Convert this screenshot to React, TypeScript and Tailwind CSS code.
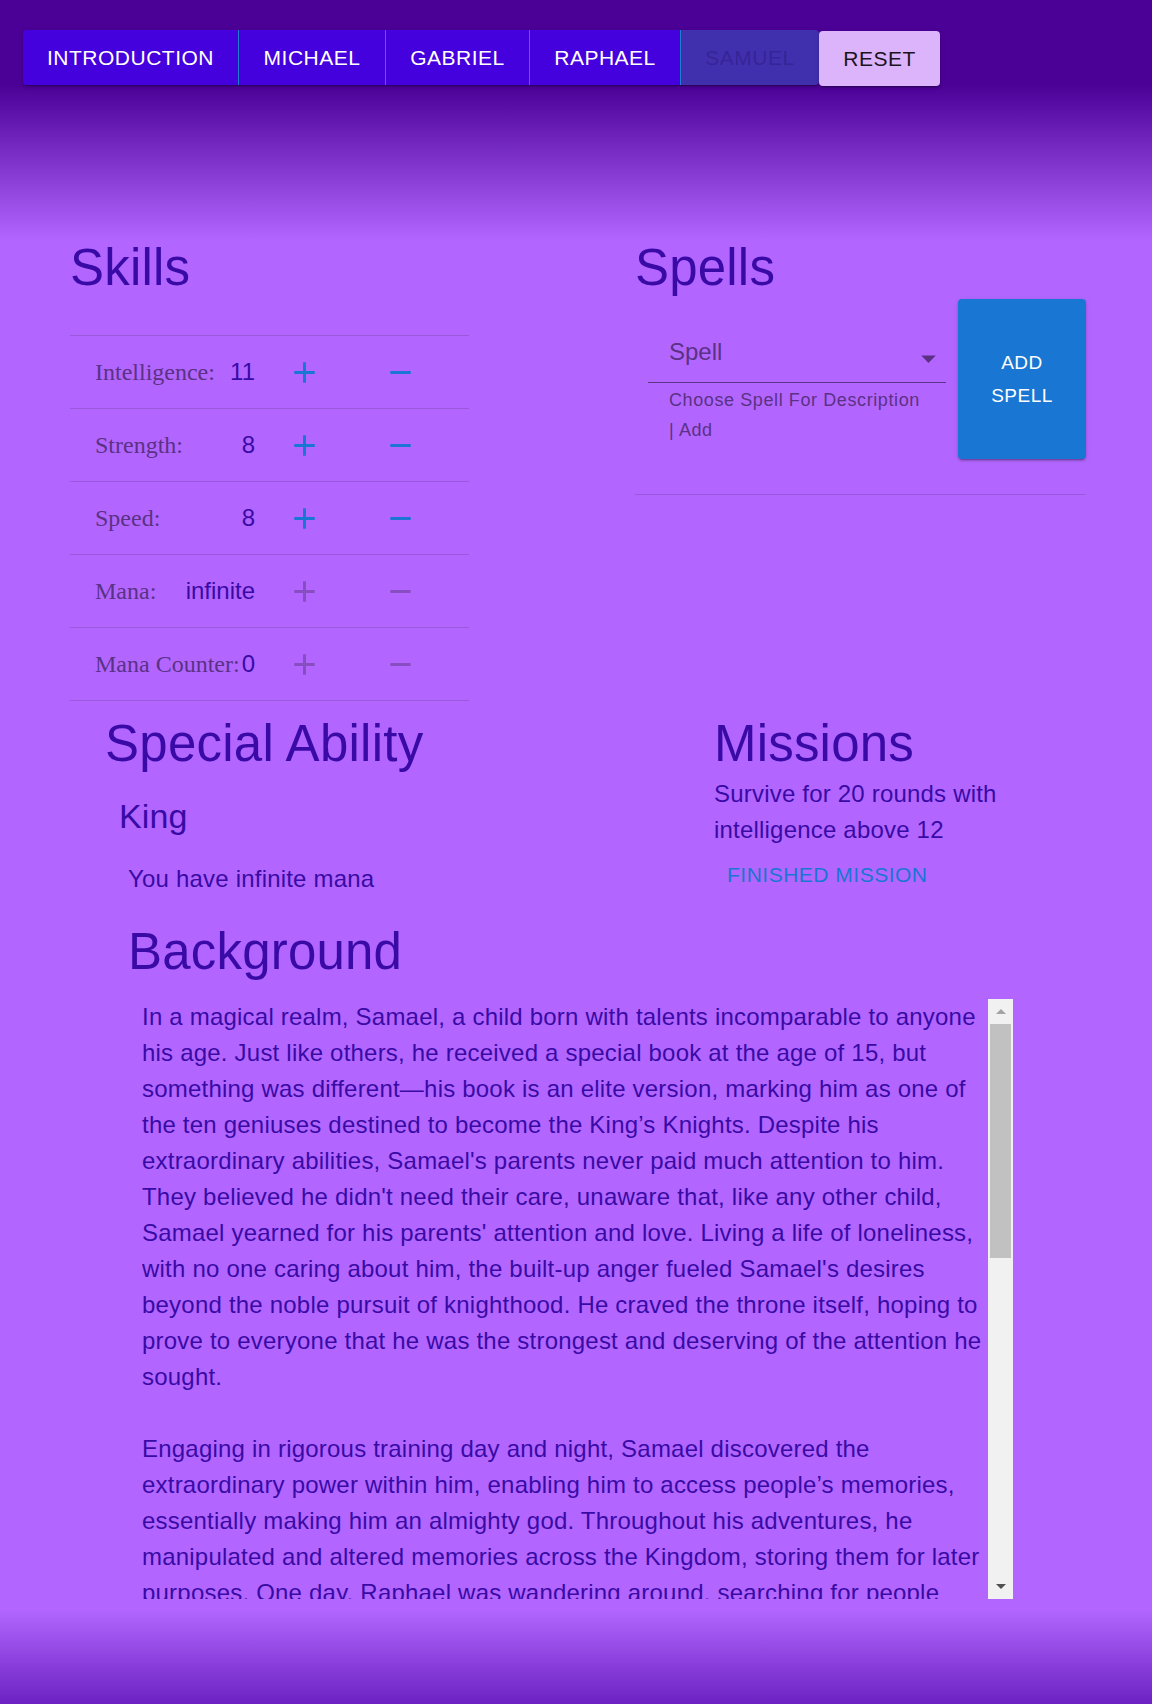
import React from 'react';

const tabs = [
  { label: 'Introduction', width: 'w-[216px]', disabled: false },
  { label: 'Michael', width: 'w-[147px]', disabled: false },
  { label: 'Gabriel', width: 'w-[144px]', disabled: false },
  { label: 'Raphael', width: 'w-[151px]', disabled: false },
  { label: 'Samuel', width: 'w-[138px]', disabled: true },
];

const skills = [
  { label: 'Intelligence:', value: '11', enabled: true },
  { label: 'Strength:', value: '8', enabled: true },
  { label: 'Speed:', value: '8', enabled: true },
  { label: 'Mana:', value: 'infinite', enabled: false },
  { label: 'Mana Counter:', value: '0', enabled: false },
];

const AddIcon = () => (
  <svg viewBox="0 0 24 24" className="h-[35px] w-[35px]" fill="currentColor">
    <path d="M19 13h-6v6h-2v-6H5v-2h6V5h2v6h6v2z" />
  </svg>
);

const RemoveIcon = () => (
  <svg viewBox="0 0 24 24" className="h-[35px] w-[35px]" fill="currentColor">
    <path d="M19 13H5v-2h14v2z" />
  </svg>
);

const SkillRow = ({ label, value, enabled }: { label: string; value: string; enabled: boolean }) => (
  <div className="flex h-[73px] items-center border-b border-[#9b58dc] pl-[25px]">
    <div className="flex w-[160px] items-center justify-between">
      <span className="font-['Liberation_Serif','Times_New_Roman',serif] text-[24px] leading-[36px] text-[#5b3185]">
        {label}
      </span>
      <span className="text-[24px] leading-[36px] text-[#3a0aa6]">{value}</span>
    </div>
    <button
      type="button"
      disabled={!enabled}
      className={
        enabled
          ? 'ml-[24px] flex h-[51px] w-[51px] items-center justify-center rounded-full text-[#1976d2]'
          : 'ml-[24px] flex h-[51px] w-[51px] items-center justify-center rounded-full text-[#864ec0]'
      }
    >
      <AddIcon />
    </button>
    <button
      type="button"
      disabled={!enabled}
      className={
        enabled
          ? 'ml-[45px] flex h-[51px] w-[51px] items-center justify-center rounded-full text-[#1976d2]'
          : 'ml-[45px] flex h-[51px] w-[51px] items-center justify-center rounded-full text-[#864ec0]'
      }
    >
      <RemoveIcon />
    </button>
  </div>
);

const App = () => {
  return (
    <div className="min-h-screen w-full bg-[linear-gradient(180deg,#4b0096_0px,#4b0096_85px,#b266ff_240px,#b266ff_calc(100%_-_94px),#6c22c2_100%)] font-['Liberation_Sans',Arial,sans-serif]">
      {/* Tabs */}
      <nav className="flex h-[238px] items-start pl-[23px] pt-[30px]">
        <div className="flex h-[55px] overflow-hidden rounded-[4px] shadow-[0_3px_1px_-2px_rgba(0,0,0,0.2),0_2px_2px_0_rgba(0,0,0,0.14),0_1px_5px_0_rgba(0,0,0,0.12)]">
          {tabs.map((t) =>
            t.disabled ? (
              <button
                key={t.label}
                type="button"
                disabled
                className={`${t.width} flex h-full items-center justify-center bg-[#4030ae] text-[21px] uppercase tracking-[0.5px] text-[#372496]`}
              >
                {t.label}
              </button>
            ) : (
              <button
                key={t.label}
                type="button"
                className={`${t.width} flex h-full items-center justify-center border-r border-[#1c7fd0] bg-[#4400dd] text-[21px] uppercase tracking-[0.5px] text-white`}
              >
                {t.label}
              </button>
            )
          )}
        </div>
        <button
          type="button"
          className="mt-px flex h-[55px] w-[121px] items-center justify-center rounded-[4px] bg-[#dcb4fc] text-[21px] uppercase tracking-[0.5px] text-[#1b1420] shadow-[0_3px_1px_-2px_rgba(0,0,0,0.2),0_2px_2px_0_rgba(0,0,0,0.14),0_1px_5px_0_rgba(0,0,0,0.12)]"
        >
          Reset
        </button>
      </nav>

      {/* Skills + Spells */}
      <section className="flex items-start">
        <div className="ml-[70px] w-[399px]">
          <h2 className="text-[51px] leading-[60px] tracking-[0.2px] text-[#3a0aa6]">Skills</h2>
          <div className="mt-[37px] border-t border-[#9b58dc]">
            {skills.map((s) => (
              <SkillRow key={s.label} {...s} />
            ))}
          </div>
        </div>

        <div className="ml-[166px] w-[451px]">
          <h2 className="text-[51px] leading-[60px] tracking-[0.2px] text-[#3a0aa6]">Spells</h2>
          <div className="mt-[1px] flex items-start">
            <div className="ml-[13px] w-[298px]">
              <div className="border-b border-[#5b3486] pb-[12px] pl-[21px] pt-[35px]">
                <div className="flex h-[36px] items-start">
                  <span className="flex-1 text-[24px] leading-[36px] text-[#5b3185]">Spell</span>
                  <svg viewBox="0 0 24 24" className="mt-[7px] h-[35px] w-[35px] shrink-0 text-[#5b3185]" fill="currentColor">
                    <path d="M7 10l5 5 5-5z" />
                  </svg>
                </div>
              </div>
              <p className="ml-[21px] mt-[3px] w-[255px] text-[18px] leading-[1.66] tracking-[0.6px] text-[#5b3185]">
                Choose Spell For Description | Add
              </p>
            </div>
            <button
              type="button"
              className="ml-[12px] flex h-[160px] w-[128px] items-center justify-center rounded-[4px] bg-[#1976d2] px-[16px] text-center text-[19px] uppercase leading-[1.75] tracking-[0.5px] text-white shadow-[0_3px_1px_-2px_rgba(0,0,0,0.2),0_2px_2px_0_rgba(0,0,0,0.14),0_1px_5px_0_rgba(0,0,0,0.12)]"
            >
              Add Spell
            </button>
          </div>
          <div className="h-[36px] border-b border-[#9b58dc]" />
        </div>
      </section>

      {/* Special ability + Missions */}
      <section className="flex items-start pt-[13px]">
        <div className="ml-[105px] w-[609px]">
          <h2 className="text-[51px] leading-[60px] tracking-[0.25px] text-[#3a0aa6]">Special Ability</h2>
          <h3 className="ml-[14px] mt-[21px] text-[34px] leading-[42px] tracking-[0.1px] text-[#3a0aa6]">King</h3>
          <p className="ml-[23px] mt-[24px] text-[24px] leading-[36px] tracking-[0.2px] text-[#3a0aa6]">
            You have infinite mana
          </p>
        </div>
        <div className="w-[320px]">
          <h2 className="text-[51px] leading-[60px] tracking-[0.2px] text-[#3a0aa6]">Missions</h2>
          <p className="mt-[2px] w-[300px] text-[24px] leading-[36px] tracking-[0.2px] text-[#3a0aa6]">
            Survive for 20 rounds with intelligence above 12
          </p>
          <button
            type="button"
            className="ml-[5px] mt-[5px] rounded-[4px] px-[8px] py-[6px] text-[21px] uppercase leading-[32px] tracking-[0.5px] text-[#1976d2]"
          >
            Finished Mission
          </button>
        </div>
      </section>

      {/* Background */}
      <section className="ml-[128px] mt-[25px]">
        <h2 className="text-[51px] leading-[60px] tracking-[0.2px] text-[#3a0aa6]">Background</h2>
        <div className="ml-[14px] mt-[17px] flex h-[600px]">
          <div className="w-[846px] overflow-hidden text-[24px] leading-[36px] tracking-[0.21px] text-[#3a0aa6]">
            <p className="mb-[36px]">
              In a magical realm, Samael, a child born with talents incomparable to anyone his age. Just like
              others, he received a special book at the age of 15, but something was different—his book is an
              elite version, marking him as one of the ten geniuses destined to become the King’s Knights.
              Despite his extraordinary abilities, Samael's parents never paid much attention to him. They
              believed he didn't need their care, unaware that, like any other child, Samael yearned for his
              parents' attention and love. Living a life of loneliness, with no one caring about him, the
              built-up anger fueled Samael's desires beyond the noble pursuit of knighthood. He craved the throne
              itself, hoping to prove to everyone that he was the strongest and deserving of the attention he
              sought.
            </p>
            <p>
              Engaging in rigorous training day and night, Samael discovered the extraordinary power within him,
              enabling him to access people’s memories, essentially making him an almighty god. Throughout his
              adventures, he manipulated and altered memories across the Kingdom, storing them for later
              purposes. One day, Raphael was wandering around, searching for people whose memories had been
              changed.
            </p>
          </div>
          {/* scrollbar */}
          <div className="flex h-full w-[25px] flex-col bg-[#f1f1f1]">
            <div className="flex h-[25px] items-center justify-center">
              <svg viewBox="0 0 10 5" className="h-[5px] w-[10px]" fill="#a3a3a3">
                <polygon points="0,5 5,0 10,5" />
              </svg>
            </div>
            <div className="mx-[2px] h-[234px] bg-[#c1c1c1]" />
            <div className="flex-1" />
            <div className="flex h-[25px] items-center justify-center">
              <svg viewBox="0 0 10 5" className="h-[5px] w-[10px]" fill="#505050">
                <polygon points="0,0 10,0 5,5" />
              </svg>
            </div>
          </div>
        </div>
      </section>
    </div>
  );
};

export default App;
